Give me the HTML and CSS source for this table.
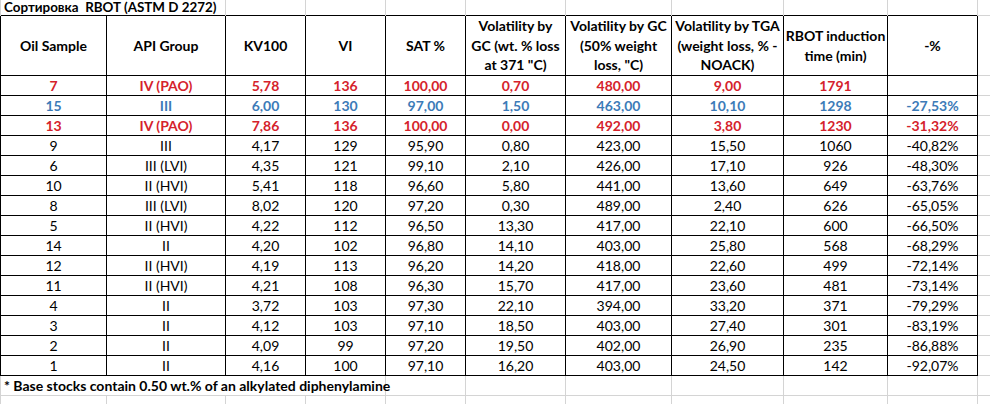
FILE: index.html
```html
<!DOCTYPE html>
<html>
<head>
<meta charset="utf-8">
<link rel="stylesheet" href="styles.css">
</head>
<body>
<table class="sheet">
  <colgroup>
    <col class="c1"><col class="c2"><col class="c3"><col class="c4"><col class="c5">
    <col class="c6"><col class="c7"><col class="c8"><col class="c9"><col class="c10"><col class="c11">
  </colgroup>
  <tr class="title-row">
    <td colspan="2" class="title">Сортировка&nbsp; RBOT (ASTM D 2272)</td>
    <td></td><td></td><td></td><td></td><td></td><td></td><td></td><td></td><td class="edge"></td>
  </tr>
  <tr class="head">
    <th>Oil Sample</th>
    <th>API Group</th>
    <th>KV100</th>
    <th>VI</th>
    <th>SAT %</th>
    <th>Volatility by<br>GC (wt. % loss<br>at 371 "C)</th>
    <th>Volatility by GC<br>(50% weight<br>loss, "C)</th>
    <th>Volatility by TGA<br>(weight loss, % -<br>NOACK)</th>
    <th>RBOT induction<br>time (min)</th>
    <th>-%</th>
    <td class="grid"></td>
  </tr>
  <tr class="red"><td>7</td><td>IV (PAO)</td><td>5,78</td><td>136</td><td>100,00</td><td>0,70</td><td>480,00</td><td>9,00</td><td>1791</td><td></td><td class="grid"></td></tr>
  <tr class="blue"><td>15</td><td>III</td><td>6,00</td><td>130</td><td>97,00</td><td>1,50</td><td>463,00</td><td>10,10</td><td>1298</td><td>-27,53%</td><td class="grid"></td></tr>
  <tr class="red"><td>13</td><td>IV (PAO)</td><td>7,86</td><td>136</td><td>100,00</td><td>0,00</td><td>492,00</td><td>3,80</td><td>1230</td><td>-31,32%</td><td class="grid"></td></tr>
  <tr><td>9</td><td>III</td><td>4,17</td><td>129</td><td>95,90</td><td>0,80</td><td>423,00</td><td>15,50</td><td>1060</td><td>-40,82%</td><td class="grid"></td></tr>
  <tr><td>6</td><td>III (LVI)</td><td>4,35</td><td>121</td><td>99,10</td><td>2,10</td><td>426,00</td><td>17,10</td><td>926</td><td>-48,30%</td><td class="grid"></td></tr>
  <tr><td>10</td><td>II (HVI)</td><td>5,41</td><td>118</td><td>96,60</td><td>5,80</td><td>441,00</td><td>13,60</td><td>649</td><td>-63,76%</td><td class="grid"></td></tr>
  <tr><td>8</td><td>III (LVI)</td><td>8,02</td><td>120</td><td>97,20</td><td>0,30</td><td>489,00</td><td>2,40</td><td>626</td><td>-65,05%</td><td class="grid"></td></tr>
  <tr><td>5</td><td>II (HVI)</td><td>4,22</td><td>112</td><td>96,50</td><td>13,30</td><td>417,00</td><td>22,10</td><td>600</td><td>-66,50%</td><td class="grid"></td></tr>
  <tr><td>14</td><td>II</td><td>4,20</td><td>102</td><td>96,80</td><td>14,10</td><td>403,00</td><td>25,80</td><td>568</td><td>-68,29%</td><td class="grid"></td></tr>
  <tr><td>12</td><td>II (HVI)</td><td>4,19</td><td>113</td><td>96,20</td><td>14,20</td><td>418,00</td><td>22,60</td><td>499</td><td>-72,14%</td><td class="grid"></td></tr>
  <tr><td>11</td><td>II (HVI)</td><td>4,21</td><td>108</td><td>96,30</td><td>15,70</td><td>417,00</td><td>23,60</td><td>481</td><td>-73,14%</td><td class="grid"></td></tr>
  <tr><td>4</td><td>II</td><td>3,72</td><td>103</td><td>97,30</td><td>22,10</td><td>394,00</td><td>33,20</td><td>371</td><td>-79,29%</td><td class="grid"></td></tr>
  <tr><td>3</td><td>II</td><td>4,12</td><td>103</td><td>97,10</td><td>18,50</td><td>403,00</td><td>27,40</td><td>301</td><td>-83,19%</td><td class="grid"></td></tr>
  <tr><td>2</td><td>II</td><td>4,09</td><td>99</td><td>97,20</td><td>19,50</td><td>402,00</td><td>26,90</td><td>235</td><td>-86,88%</td><td class="grid"></td></tr>
  <tr><td>1</td><td>II</td><td>4,16</td><td>100</td><td>97,10</td><td>16,20</td><td>403,00</td><td>24,50</td><td>142</td><td>-92,07%</td><td class="grid"></td></tr>
  <tr class="note-row">
    <td colspan="4" class="note">* Base stocks contain 0.50 wt.% of an alkylated diphenylamine</td>
    <td></td><td></td><td></td><td></td><td></td><td></td><td></td>
  </tr>
  <tr class="empty-row">
    <td></td><td></td><td></td><td></td><td></td><td></td><td></td><td></td><td></td><td></td><td></td>
  </tr>
</table>
</body>
</html>
```
FILE: styles.css
```css
html, body {
  margin: 0;
  padding: 0;
  background: #ffffff;
}

body {
  font-family: Lato, "Noto Sans", sans-serif;
  font-size: 14px;
  color: #000000;
  overflow: hidden;
}

.sheet {
  border-collapse: collapse;
  table-layout: fixed;
  width: 997px;
}

.c1 { width: 106px; }
.c2 { width: 119px; }
.c3 { width: 80px; }
.c4 { width: 80px; }
.c5 { width: 80px; }
.c6 { width: 100px; }
.c7 { width: 106px; }
.c8 { width: 112px; }
.c9 { width: 104px; }
.c10 { width: 90px; }
.c11 { width: 20px; }

td, th {
  padding: 0;
  text-align: center;
  white-space: nowrap;
  line-height: 19px;
  height: 19px;
  border: 1px solid #000000;
  vertical-align: middle;
  overflow: visible;
}

th {
  font-weight: 700;
  height: 59px;
  line-height: 19.6px;
}

.title-row td {
  height: 15px;
  line-height: 15px;
  border: 1px solid #d4d4d4;
  border-top: none;
  border-bottom: none;
}

.title-row td.edge {
  border-bottom: 1px solid #d4d4d4;
}

.title-row td.title {
  text-align: left;
  font-weight: 700;
  font-size: 13.4px;
  padding-left: 3px;
  border-left: 1px solid #d4d4d4;
}

td.grid {
  border: 1px solid #d4d4d4;
  border-left: 1px solid #000000;
}

.red td:not(.grid) {
  color: #d5222b;
  font-weight: 700;
}

.blue td:not(.grid) {
  color: #3c7bb8;
  font-weight: 700;
}

.note-row td,
.empty-row td {
  border: 1px solid #d4d4d4;
}

.note-row td {
  border-top: 1px solid #000000;
}

.note-row td.note {
  text-align: left;
  font-weight: 700;
  padding-left: 3px;
}
```
